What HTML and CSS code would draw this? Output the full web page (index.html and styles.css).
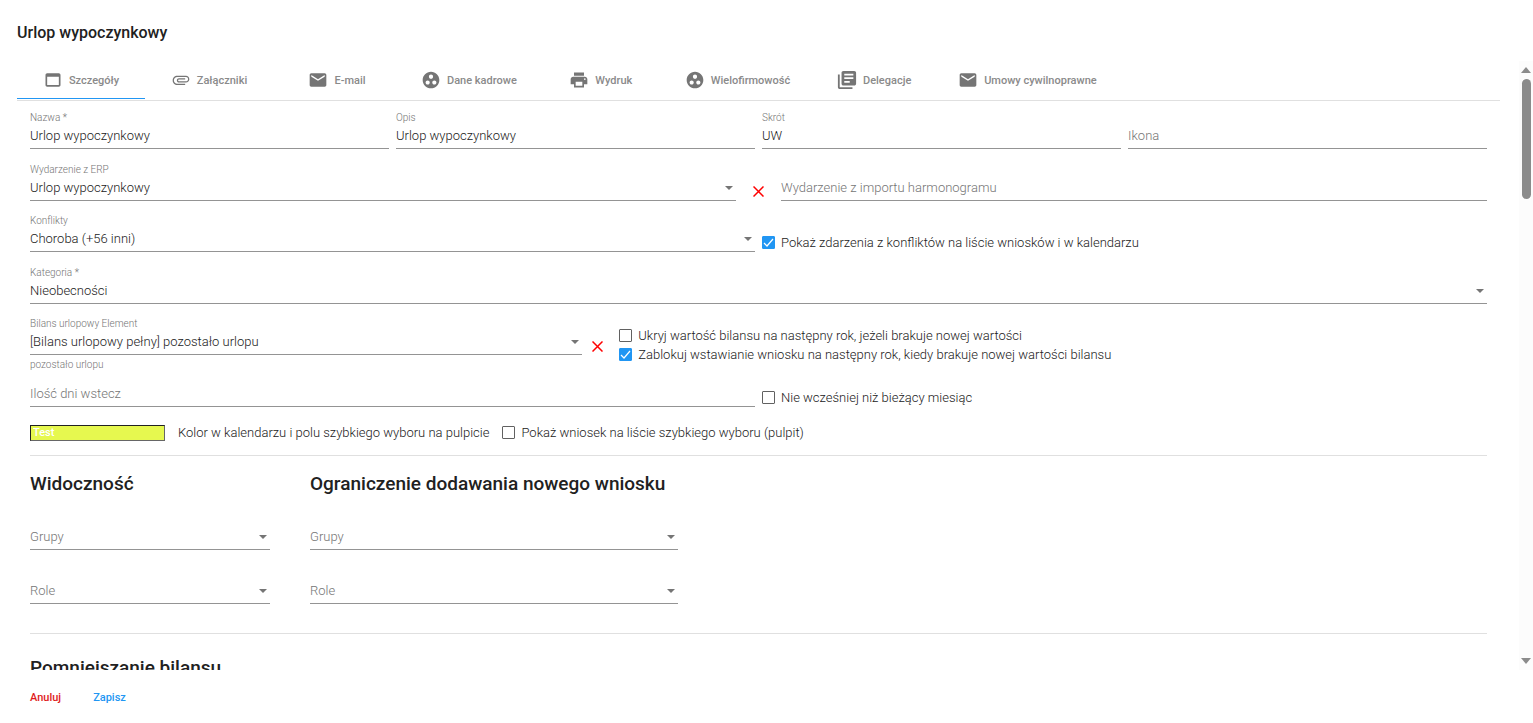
FILE: index.html
```html
<!DOCTYPE html>
<html lang="pl">
<head>
  <meta charset="UTF-8">
  <title>Urlop wypoczynkowy</title>
  <link rel="stylesheet" href="styles.css">
</head>
<body>
  <div class="dialog">
    <h1 class="title">Urlop wypoczynkowy</h1>

    <div class="scroll-area">
      <div class="content">
        <nav class="tabs">
          <a class="tab active" href="#szczegoly">
            <svg class="icon" viewBox="0 0 24 24"><path d="M19 4H5c-1.11 0-2 .9-2 2v12c0 1.1.89 2 2 2h14c1.1 0 2-.9 2-2V6c0-1.1-.9-2-2-2zm0 14H5V8h14v10z"/></svg>
            Szczegóły
          </a>
          <a class="tab" href="#zalaczniki">
            <svg class="icon" viewBox="0 0 24 24"><path d="M2 12.5C2 9.46 4.46 7 7.5 7H18c2.21 0 4 1.79 4 4s-1.79 4-4 4H9.5C8.12 15 7 13.88 7 12.5S8.12 10 9.5 10H17v1.5H9.5c-.55 0-1 .45-1 1s.45 1 1 1H18c1.38 0 2.5-1.12 2.5-2.5S19.38 8.5 18 8.5H7.5c-2.21 0-4 1.79-4 4s1.79 4 4 4H17V18H7.5C4.46 18 2 15.54 2 12.5z"/></svg>
            Załączniki
          </a>
          <a class="tab" href="#email">
            <svg class="icon" viewBox="0 0 24 24"><path d="M20 4H4c-1.1 0-2 .9-2 2v12c0 1.1.9 2 2 2h16c1.1 0 2-.9 2-2V6c0-1.1-.9-2-2-2zm0 4l-8 5-8-5V6l8 5 8-5v2z"/></svg>
            E-mail
          </a>
          <a class="tab" href="#dane-kadrowe">
            <svg class="icon" viewBox="0 0 24 24"><path d="M12 2C6.48 2 2 6.48 2 12s4.48 10 10 10 10-4.48 10-10S17.52 2 12 2zM8 17.5c-1.38 0-2.5-1.12-2.5-2.5s1.12-2.5 2.5-2.5 2.5 1.12 2.5 2.5-1.12 2.5-2.5 2.5zM9.5 8c0-1.38 1.12-2.5 2.5-2.5s2.5 1.12 2.5 2.5-1.12 2.5-2.5 2.5S9.5 9.38 9.5 8zm6.5 9.5c-1.38 0-2.5-1.12-2.5-2.5s1.12-2.5 2.5-2.5 2.5 1.12 2.5 2.5-1.12 2.5-2.5 2.5z"/></svg>
            Dane kadrowe
          </a>
          <a class="tab" href="#wydruk">
            <svg class="icon" viewBox="0 0 24 24"><path d="M19 8H5c-1.66 0-3 1.34-3 3v6h4v4h12v-4h4v-6c0-1.66-1.34-3-3-3zm-3 11H8v-5h8v5zm3-7c-.55 0-1-.45-1-1s.45-1 1-1 1 .45 1 1-.45 1-1 1zm-1-9H6v4h12V3z"/></svg>
            Wydruk
          </a>
          <a class="tab" href="#wielofirmowosc">
            <svg class="icon" viewBox="0 0 24 24"><path d="M12 2C6.48 2 2 6.48 2 12s4.48 10 10 10 10-4.48 10-10S17.52 2 12 2zM8 17.5c-1.38 0-2.5-1.12-2.5-2.5s1.12-2.5 2.5-2.5 2.5 1.12 2.5 2.5-1.12 2.5-2.5 2.5zM9.5 8c0-1.38 1.12-2.5 2.5-2.5s2.5 1.12 2.5 2.5-1.12 2.5-2.5 2.5S9.5 9.38 9.5 8zm6.5 9.5c-1.38 0-2.5-1.12-2.5-2.5s1.12-2.5 2.5-2.5 2.5 1.12 2.5 2.5-1.12 2.5-2.5 2.5z"/></svg>
            Wielofirmowość
          </a>
          <a class="tab" href="#delegacje">
            <svg class="icon" viewBox="1 1 22 22"><path d="M4 6H2v14c0 1.1.9 2 2 2h14v-2H4V6zm16-4H8c-1.1 0-2 .9-2 2v12c0 1.1.9 2 2 2h12c1.1 0 2-.9 2-2V4c0-1.1-.9-2-2-2zm-1 9H9V9h10v2zm-4 4H9v-2h6v2zm4-8H9V5h10v2z"/></svg>
            Delegacje
          </a>
          <a class="tab" href="#umowy">
            <svg class="icon" viewBox="0 0 24 24"><path d="M20 4H4c-1.1 0-2 .9-2 2v12c0 1.1.9 2 2 2h16c1.1 0 2-.9 2-2V6c0-1.1-.9-2-2-2zm0 4l-8 5-8-5V6l8 5 8-5v2z"/></svg>
            Umowy cywilnoprawne
          </a>
        </nav>

        <form class="form" id="request-form">
          <div class="row four">
            <div class="field">
              <label for="name">Nazwa *</label>
              <input type="text" id="name" value="Urlop wypoczynkowy">
            </div>
            <div class="field">
              <label for="desc">Opis</label>
              <input type="text" id="desc" value="Urlop wypoczynkowy">
            </div>
            <div class="field">
              <label for="short">Skrót</label>
              <input type="text" id="short" value="UW">
            </div>
            <div class="field">
              <input type="text" placeholder="Ikona" aria-label="Ikona">
            </div>
          </div>

          <div class="row clearable">
            <div class="field">
              <label for="erp">Wydarzenie z ERP</label>
              <div class="select"><select id="erp"><option>Urlop wypoczynkowy</option></select></div>
            </div>
            <button type="button" class="clear" aria-label="Wyczyść">
              <svg viewBox="0 0 11 11"><path d="M.5.5l10 10M10.5.5l-10 10"/></svg>
            </button>
            <div class="field">
              <input type="text" placeholder="Wydarzenie z importu harmonogramu" aria-label="Wydarzenie z importu harmonogramu">
            </div>
          </div>

          <div class="row two">
            <div class="field">
              <label for="conflicts">Konflikty</label>
              <div class="select"><select id="conflicts"><option>Choroba (+56 inni)</option></select></div>
            </div>
            <label class="check"><input type="checkbox" checked>Pokaż zdarzenia z konfliktów na liście wniosków i w kalendarzu</label>
          </div>

          <div class="row category">
            <div class="field">
              <label for="category">Kategoria *</label>
              <div class="select"><select id="category"><option>Nieobecności</option></select></div>
            </div>
          </div>

          <div class="row balance">
            <div class="field">
              <label for="balance">Bilans urlopowy Element</label>
              <div class="select"><select id="balance"><option>[Bilans urlopowy pełny] pozostało urlopu</option></select></div>
              <span class="hint">pozostało urlopu</span>
            </div>
            <button type="button" class="clear" aria-label="Wyczyść">
              <svg viewBox="0 0 11 11"><path d="M.5.5l10 10M10.5.5l-10 10"/></svg>
            </button>
            <div class="checks">
              <label class="check"><input type="checkbox">Ukryj wartość bilansu na następny rok, jeżeli brakuje nowej wartości</label>
              <label class="check"><input type="checkbox" checked>Zablokuj wstawianie wniosku na następny rok, kiedy brakuje nowej wartości bilansu</label>
            </div>
          </div>

          <div class="row two">
            <div class="field">
              <input type="text" placeholder="Ilość dni wstecz" aria-label="Ilość dni wstecz">
            </div>
            <label class="check"><input type="checkbox">Nie wcześniej niż bieżący miesiąc</label>
          </div>

          <div class="color-row">
            <input class="color" type="text" id="color" value="Test" readonly>
            <label for="color">Kolor w kalendarzu i polu szybkiego wyboru na pulpicie</label>
            <label class="check"><input type="checkbox">Pokaż wniosek na liście szybkiego wyboru (pulpit)</label>
          </div>

          <div class="groups">
            <section class="group visibility">
              <h2>Widoczność</h2>
              <div class="select empty"><select aria-label="Grupy"><option>Grupy</option></select></div>
              <div class="select empty"><select aria-label="Role"><option>Role</option></select></div>
            </section>
            <section class="group limits">
              <h2>Ograniczenie dodawania nowego wniosku</h2>
              <div class="select empty"><select aria-label="Grupy"><option>Grupy</option></select></div>
              <div class="select empty"><select aria-label="Role"><option>Role</option></select></div>
            </section>
          </div>

          <section class="reduce">
            <h2>Pomniejszanie bilansu</h2>
          </section>
        </form>
      </div>

      <div class="scrollbar" aria-hidden="true">
        <span class="arrow-up"></span>
        <span class="thumb"></span>
        <span class="arrow-down"></span>
      </div>
    </div>

    <footer class="actions">
      <button type="button" class="cancel">Anuluj</button>
      <button type="submit" class="save" form="request-form">Zapisz</button>
    </footer>
  </div>
</body>
</html>
```
FILE: styles.css
```css
* {
  box-sizing: border-box;
}
body {
  margin: 0;
  font-family: Roboto, sans-serif;
  font-size: 13px;
  color: #212121;
  background: #fff;
}
input, select, button {
  font: inherit;
  color: inherit;
}
.dialog {
  display: flex;
  flex-direction: column;
  height: 100vh;
}
.title {
  margin: 0;
  padding: 21px 17px 16px;
  font-size: 16px;
  line-height: 24px;
  font-weight: 500;
}
.scroll-area {
  display: flex;
  flex: 1;
  min-height: 0;
}
.content {
  flex: 1;
  overflow: hidden;
  padding: 0 19px 0 17px;
}

/* tabs */
.tabs {
  display: flex;
  height: 40px;
  padding-bottom: 1px;
  border-bottom: 1px solid #e0e0e0;
}
.tab {
  display: flex;
  align-items: center;
  justify-content: center;
  gap: 6px;
  min-width: 128px;
  padding: 1px 20px 0;
  border-bottom: 1px solid transparent;
  font-size: 11px;
  font-weight: 500;
  color: #8a8a8a;
  text-decoration: none;
  white-space: nowrap;
}
.tab.active {
  border-bottom-color: #2196f3;
}
.icon {
  width: 20px;
  height: 20px;
  fill: #757575;
}

/* form fields */
.form {
  padding: 11px 13px 0;
}
.row {
  display: grid;
  align-items: end;
  column-gap: 7px;
  margin-bottom: 15px;
}
.four {
  grid-template-columns: repeat(4, 1fr);
}
.two {
  grid-template-columns: 1fr 1fr;
}
.clearable {
  grid-template-columns: 1fr 45px 1fr;
  column-gap: 0;
  margin-bottom: 14px;
}
.category {
  margin-bottom: 14px;
}
.balance {
  grid-template-columns: 7fr 37px 11fr;
  align-items: start;
  column-gap: 0;
  margin-bottom: 11px;
}
.field {
  display: flex;
  flex-direction: column;
}
.field label, .hint {
  font-size: 10px;
  line-height: 12px;
  font-weight: 300;
  color: #757575;
}
.hint {
  margin-top: 4px;
}
.field input, .select select {
  width: 100%;
  height: 25px;
  padding: 0 0 2px;
  border: 0;
  border-bottom: 1px solid #949494;
  border-radius: 0;
  background: none;
  font-weight: 300;
  outline: 0;
  appearance: none;
}
.field input::placeholder {
  color: #757575;
  opacity: 1;
}
.select {
  position: relative;
}
.select::after {
  content: "";
  position: absolute;
  top: 10px;
  right: 3px;
  border: 4px solid transparent;
  border-top-color: #757575;
  border-bottom: 0;
  pointer-events: none;
}
.select.empty select {
  color: #757575;
}
.clear {
  display: flex;
  align-items: center;
  justify-content: center;
  height: 19px;
  padding: 0;
  border: 0;
  background: none;
  cursor: pointer;
}
.clear svg {
  width: 11px;
  height: 11px;
  stroke: #f00;
  stroke-width: 1.5;
}
.balance .clear {
  width: 31px;
  margin-top: 19px;
}
.checks {
  padding-top: 8px;
}
.check {
  display: flex;
  align-items: center;
  gap: 6px;
  line-height: 19px;
  font-weight: 300;
}
.check input {
  width: 13px;
  height: 13px;
  margin: 0;
  border: 1px solid #616161;
  border-radius: 1px;
  background: #fff;
  appearance: none;
}
.check input:checked {
  border-color: #2196f3;
  background: #2196f3 url("data:image/svg+xml,%3Csvg xmlns='http://www.w3.org/2000/svg' viewBox='0 0 11 11'%3E%3Cpath d='M1 6l3 3 6-7' fill='none' stroke='white' stroke-width='1.2'/%3E%3C/svg%3E") center / 11px 11px no-repeat;
}

/* calendar colour */
.color-row {
  display: flex;
  align-items: center;
  gap: 13px;
  padding: 1px 0 13px;
  border-bottom: 1px solid #e0e0e0;
  line-height: 19px;
  font-weight: 300;
}
.color {
  width: 135px;
  height: 16px;
  padding: 0 2px;
  border: 1px solid #212121;
  border-right-color: #666;
  border-bottom-color: #666;
  background: #e6f84f;
  color: #fff;
  font-size: 11px;
  line-height: 14px;
  font-weight: 500;
}

/* visibility and limits */
h2 {
  margin: 0;
  font-size: 19px;
  line-height: 24px;
  font-weight: 500;
}
.groups {
  display: flex;
  gap: 40px;
  padding: 16px 0 29px;
  border-bottom: 1px solid #e0e0e0;
}
.group {
  display: flex;
  flex-direction: column;
  gap: 29px;
}
.visibility {
  width: 240px;
}
.limits {
  width: 368px;
}
.reduce {
  padding-top: 22px;
}

/* scrollbar */
.scrollbar {
  display: flex;
  flex-direction: column;
  align-items: center;
  width: 14px;
  padding: 6px 0;
  background: #fcfcfc;
}
.arrow-up, .arrow-down {
  border: 5px solid transparent;
}
.arrow-up {
  border-top: 0;
  border-bottom: 6px solid #8b8b8b;
}
.arrow-down {
  margin-top: auto;
  border-top: 6px solid #8b8b8b;
  border-bottom: 0;
}
.thumb {
  width: 9px;
  height: 120px;
  margin-top: 6px;
  border-radius: 5px;
  background: #8b8b8b;
}

/* footer */
.actions {
  display: flex;
  gap: 32px;
  height: 53px;
  padding: 2px 30px 0;
}
.actions button {
  padding: 0;
  border: 0;
  background: none;
  font-size: 11px;
  font-weight: 500;
  cursor: pointer;
}
.actions .cancel {
  color: #e01b1b;
}
.actions .save {
  color: #2196f3;
}
```
